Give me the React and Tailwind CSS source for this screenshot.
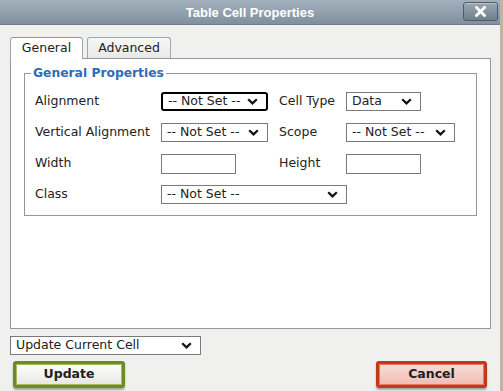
import React from "react";

const F = { fontFamily: '"DejaVu Sans", Verdana, sans-serif' };

function Chevron() {
  return (
    <svg width="11" height="7" viewBox="0 0 11 7" className="shrink-0">
      <path d="M1.2 1.2 L5.5 5.4 L9.8 1.2" fill="none" stroke="#111" strokeWidth="2.2" />
    </svg>
  );
}

function Select({ text, w, focused }) {
  return (
    <div
      className={
        "flex items-center justify-between bg-white h-[19px] pl-[5px] pr-[8px] text-[12.5px] text-[#222] " +
        (focused ? "border-2 border-black rounded-[3px] pl-[4px] pr-[7px]" : "border border-[#7a7a7a]")
      }
      style={{ width: w }}
    >
      <span className="leading-none whitespace-nowrap">{text}</span>
      <Chevron />
    </div>
  );
}

function Input() {
  return <div className="w-[75px] h-[20px] border border-[#7a7a7a] bg-white" />;
}

function Label({ children }) {
  return <div className="text-[12.5px] text-[#222] leading-none whitespace-nowrap">{children}</div>;
}

export default function App() {
  return (
    <div
      className="w-[503px] h-[391px] overflow-hidden bg-[#f0f0ee] flex flex-col border-r-[3px] border-r-[#c2b2a2]"
      style={F}
    >
      {/* Title bar */}
      <div className="relative h-[25px] shrink-0 flex items-center justify-center bg-gradient-to-b from-[#a3b1bd] to-[#7f909e] border-b border-b-[#6d7d8a]">
        <span
          className="text-white font-bold text-[13px] leading-none"
          style={{ fontFamily: '"Liberation Sans", Arial, sans-serif' }}
        >
          Table Cell Properties
        </span>
        <div className="absolute right-[2px] top-[2px] w-[35px] h-[19px] rounded-[3px] border border-[#4e5b66] bg-gradient-to-b from-[#9aa7b2] to-[#6f7f8c] flex items-center justify-center shadow-[inset_0_1px_0_rgba(255,255,255,0.35)]">
          <svg width="11" height="11" viewBox="0 0 11 11">
            <path d="M1.5 1.5 L9.5 9.5 M9.5 1.5 L1.5 9.5" stroke="#fff" strokeWidth="2.8" strokeLinecap="square" />
          </svg>
        </div>
      </div>

      <div className="flex flex-col pl-[10px] pt-[11px]">
        {/* Tabs */}
        <div className="flex items-end gap-[4px] h-[22px]">
          <div className="relative z-10 -mb-px w-[73px] h-[22px] bg-white border border-[#9aa8b2] border-t-[#7f9bb3] border-b-0 rounded-t-[3px] flex items-center justify-center text-[12.5px] text-[#222]">
            General
          </div>
          <div className="w-[84px] h-[21px] bg-gradient-to-b from-[#f7f7f5] to-[#e8e8e6] border border-[#9aa8b2] border-b-0 rounded-t-[3px] flex items-center justify-center text-[12.5px] text-[#222]">
            Advanced
          </div>
        </div>

        {/* Panel */}
        <div className="w-[481px] h-[271px] bg-white border border-[#8f9b9b] pt-[7px]">
          <fieldset className="mx-[13px] border border-[#8f9b9b] pl-[6px] pb-[11px]">
            <legend className="px-[2px] text-[12.3px] font-bold text-[#2d6db8] leading-[15px]">General Properties</legend>
            <div className="grid grid-cols-[126px_118px_67px_1fr] auto-rows-[19px] gap-y-[12px] items-center ml-[4px] mt-[11px]">
              <Label>Alignment</Label>
              <Select text="-- Not Set --" w={107} focused />
              <Label>Cell Type</Label>
              <Select text="Data" w={75} />

              <Label>Vertical Alignment</Label>
              <Select text="-- Not Set --" w={107} />
              <Label>Scope</Label>
              <Select text="-- Not Set --" w={109} />

              <Label>Width</Label>
              <Input />
              <Label>Height</Label>
              <Input />

              <Label>Class</Label>
              <div className="col-span-3">
                <Select text="-- Not Set --" w={186} />
              </div>
            </div>
          </fieldset>
        </div>

        {/* Bottom select */}
        <div className="mt-[7px]">
          <Select text="Update Current Cell" w={191} />
        </div>

        {/* Buttons */}
        <div className="flex justify-between mt-[6px] pl-[3px] pr-[3px] w-[480px]">
          <div className="w-[112px] h-[27px] rounded-[3px] border-[3px] border-[#6d8a26] shadow-[0_2px_2px_rgba(0,0,0,0.3),inset_0_0_0_1px_#a3bd5c] bg-gradient-to-b from-[#ffffff] to-[#e6e6e1] flex items-center justify-center text-[12.5px] font-bold text-[#1e1e1e]">
            Update
          </div>
          <div className="w-[111px] h-[27px] rounded-[3px] border-[3px] border-[#c1391c] shadow-[0_2px_2px_rgba(0,0,0,0.3),inset_0_0_0_1px_#e77a62] bg-gradient-to-b from-[#f9dcd6] to-[#efbcb3] flex items-center justify-center text-[12.5px] font-bold text-[#1e1e1e]">
            Cancel
          </div>
        </div>
      </div>
    </div>
  );
}
